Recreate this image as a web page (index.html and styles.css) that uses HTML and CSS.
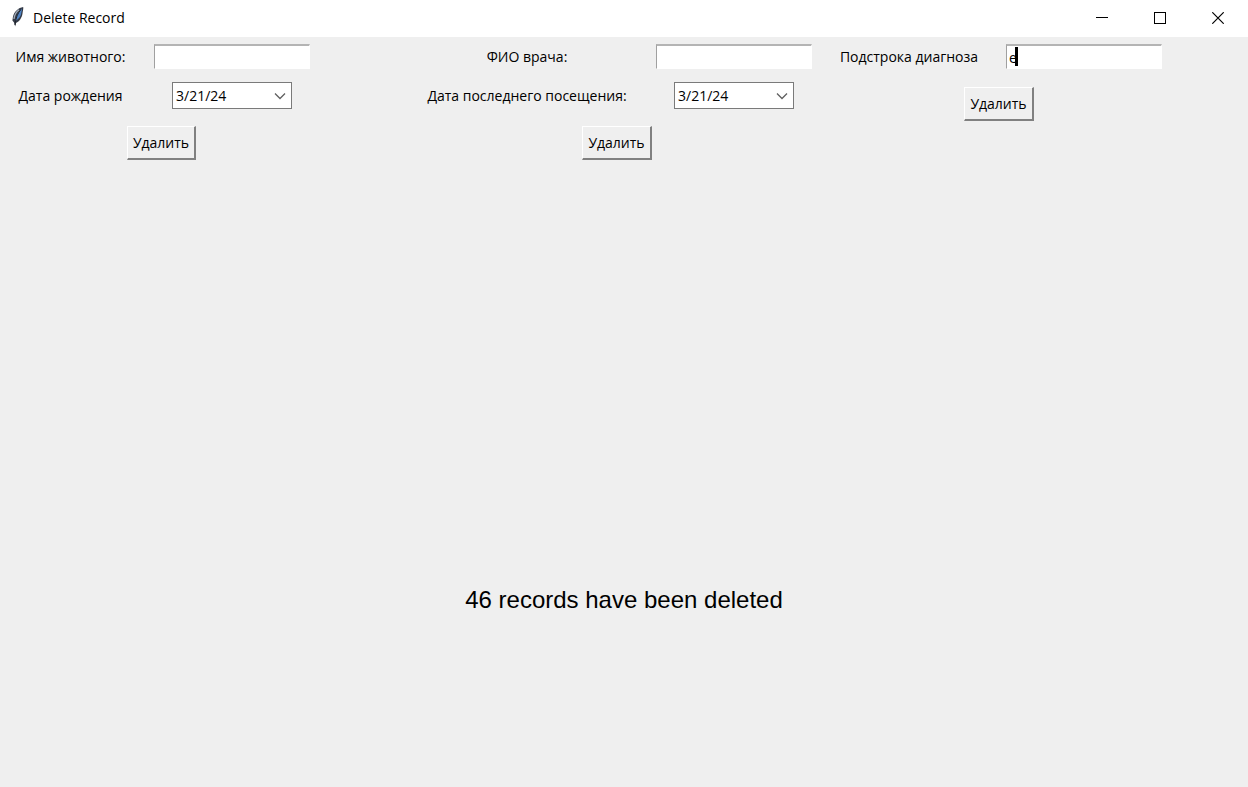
FILE: index.html
```html
<!DOCTYPE html>
<html lang="ru">
<head>
<meta charset="utf-8">
<meta name="viewport" content="width=device-width, initial-scale=1">
<title>Delete Record</title>
<link rel="stylesheet" href="styles.css">
</head>
<body>
<div class="window">
  <header class="titlebar">
    <svg class="app-icon" width="16" height="22" viewBox="0 0 16 22" aria-hidden="true">
      <path d="M14.200 1C9.500 1.800 5.200 5.500 4 10.500L3.400 14.500L5 16.500L6.200 20.500L7 17C10.500 15.500 13 11.500 13.500 7.500C13.700 5 14.600 3 14.200 1Z" fill="#343a46"/>
      <path d="M13 2.400C9.800 5 7.400 9 6.300 15C9.500 13.500 11.800 10.500 12.200 7.500C12.400 5.500 13.200 4 13 2.400Z" fill="#4f83c4"/>
      <path d="M12 3.400C8.800 7 6.600 12 6 19" fill="none" stroke="#20242c" stroke-width="1"/>
      <path d="M10 3.800C7 6 5.400 9 5 13" fill="none" stroke="#a3adba" stroke-width="1.300"/>
    </svg>
    <h1 class="title">Delete Record</h1>
    <div class="window-controls">
      <button class="window-button" type="button" aria-label="Minimize">
        <svg width="12" height="12" viewBox="0 0 12 12" shape-rendering="crispEdges"><path d="M0 5.500H12" stroke="#000"/></svg>
      </button>
      <button class="window-button" type="button" aria-label="Maximize">
        <svg width="12" height="12" viewBox="0 0 12 12" shape-rendering="crispEdges"><path d="M.5 .5H11.500V11.500H.5Z" fill="none" stroke="#000"/></svg>
      </button>
      <button class="window-button" type="button" aria-label="Close">
        <svg width="12" height="12" viewBox="0 0 12 12"><path d="M.3 .3L11.700 11.700M11.700 .3L.3 11.700" stroke="#000" stroke-width="1.200"/></svg>
      </button>
    </div>
  </header>
  <main class="content">
    <div class="panels">
      <form class="panel panel-pet">
        <label class="label" for="pet">Имя животного:</label>
        <div class="field"><input class="entry" id="pet" type="text"></div>
        <label class="label" for="birth">Дата рождения</label>
        <div class="date">
          <select class="date-select" id="birth"><option>3/21/24</option></select>
          <svg class="chevron" width="12" height="8" viewBox="0 0 12 8"><path d="M1 1.500L6 6.500L11 1.500" fill="none" stroke="#606060" stroke-width="1.300"/></svg>
        </div>
        <button class="delete" type="button">Удалить</button>
      </form>
      <form class="panel panel-doctor">
        <label class="label" for="doctor">ФИО врача:</label>
        <div class="field"><input class="entry" id="doctor" type="text"></div>
        <label class="label" for="visit">Дата последнего посещения:</label>
        <div class="date">
          <select class="date-select" id="visit"><option>3/21/24</option></select>
          <svg class="chevron" width="12" height="8" viewBox="0 0 12 8"><path d="M1 1.500L6 6.500L11 1.500" fill="none" stroke="#606060" stroke-width="1.300"/></svg>
        </div>
        <button class="delete" type="button">Удалить</button>
      </form>
      <form class="panel panel-diagnosis">
        <label class="label" for="diagnosis">Подстрока диагноза</label>
        <div class="field"><input class="entry" id="diagnosis" type="text" value="е"><span class="caret"></span></div>
        <button class="delete" type="button">Удалить</button>
      </form>
    </div>
    <p class="message" role="status">46 records have been deleted</p>
  </main>
</div>
</body>
</html>
```
FILE: styles.css
```css
* {
  box-sizing: border-box;
}

body {
  margin: 0;
  background: #efefef;
  color: #000;
  font: 14px/20px "Open Sans", "Noto Sans", sans-serif;
}

.window {
  display: flex;
  flex-direction: column;
  min-height: 100vh;
}

.titlebar {
  display: flex;
  align-items: center;
  height: 37px;
  padding-left: 9px;
  background: #fff;
}

.app-icon {
  margin-bottom: 4px;
}

.title {
  flex: 1;
  margin: 0 0 2px 8px;
  font-size: 14px;
  font-weight: 400;
}

.window-controls {
  display: flex;
  align-self: stretch;
  padding: 0 1px 2px 0;
}

.window-button {
  display: flex;
  align-items: center;
  justify-content: center;
  width: 58px;
  padding: 0;
  border: 0;
  background: none;
}

.content {
  display: grid;
  flex: 1;
  grid-template-rows: 1fr 1fr;
}

.panels {
  display: grid;
  grid-template-columns: 410fr 414fr 424fr;
  align-items: start;
}

.panel {
  display: grid;
  align-items: center;
  justify-items: center;
  grid-auto-rows: 39px;
}

.panel-pet {
  grid-template-columns: 141px 182px;
}

.panel-doctor {
  grid-template-columns: 234px 180px;
}

.panel-diagnosis {
  grid-template-columns: 170px 180px;
}

.label {
  white-space: nowrap;
}

.field {
  position: relative;
}

.entry {
  display: block;
  width: 156px;
  height: 25px;
  padding: 0 2px;
  border: 1px solid #fff;
  border-top: 2px solid #b4b4b4;
  border-left: 1px solid #a0a0a0;
  border-radius: 0;
  outline: 0;
  background: #fff;
  color: #000;
  font: inherit;
}

.caret {
  position: absolute;
  top: 3px;
  left: 9px;
  width: 3px;
  height: 19px;
  background: #000;
}

.date {
  display: grid;
  align-items: center;
}

.date-select,
.chevron {
  grid-area: 1 / 1;
}

.date-select {
  width: 120px;
  height: 27px;
  padding: 0 3px;
  border: 1px solid #7a7a7a;
  border-radius: 0;
  appearance: none;
  background: #fff;
  color: #000;
  font: inherit;
}

.chevron {
  justify-self: end;
  margin-right: 6px;
  pointer-events: none;
}

.delete {
  grid-column: 1 / -1;
  align-self: start;
  height: 34px;
  margin-top: 11px;
  padding: 0 5px;
  border: 2px solid;
  border-color: #fff #808080 #808080 #fff;
  border-width: 1px 2px 2px 1px;
  border-radius: 0;
  background: #efefef;
  color: #000;
  font: inherit;
}

.message {
  align-self: center;
  margin: 0;
  font: 24px/28px "Liberation Sans", Arial, sans-serif;
  text-align: center;
}
```
